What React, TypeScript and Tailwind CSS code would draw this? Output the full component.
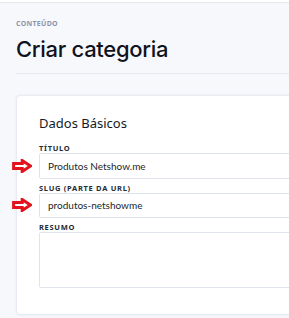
import React from 'react'

function RedArrow({ className }: { className?: string }) {
  // outlined red arrow used as an annotation next to the fields
  return (
    <svg width="20" height="14" viewBox="0 0 20 14" className={className}>
      <path
        d="M1.6 4.4 H10.2 V1.5 L18.4 7 L10.2 12.5 V9.6 H1.6 Z"
        fill="#fff"
        stroke="#e3121b"
        strokeWidth="3"
        strokeLinejoin="miter"
      />
    </svg>
  )
}

function Label({ children }: { children: React.ReactNode }) {
  return (
    <div className="text-[7.5px] leading-[8px] font-bold uppercase tracking-[0.7px] text-[#252a36] mb-px">
      {children}
    </div>
  )
}

const inputText = 'text-[10px] text-[#1b1f2b]'

export default function App() {
  return (
    <div
      className="w-[289px] h-[318px] overflow-hidden bg-[#f7f8fb] relative"
      style={{ fontFamily: '"Noto Sans", "Open Sans", sans-serif' }}
    >
      <div className="h-[3px] bg-white border-b border-[#e6e9ef]" />

      <div className="pl-4 w-[360px]">
        {/* header */}
        <div className="pt-[17px]">
          <div className="text-[7px] leading-[8px] font-bold uppercase tracking-[0.3px] text-[#8b95a7]">
            Conteúdo
          </div>
          <h1
            className="mt-[7px] text-[22px] leading-[28px] font-medium text-[#0f1320] tracking-[-0.3px]"
            style={{ fontFamily: 'Inter, sans-serif' }}
          >
            Criar categoria
          </h1>
        </div>
        <div className="mt-[10px] h-px bg-[#e6e9ef]" />

        {/* card */}
        <div className="mt-[21px] bg-white border border-[#e8ebf1] rounded-[4px] shadow-[0_0_3px_rgba(20,30,60,0.06)] pl-[22px] pt-[19px] pb-[26px]">
          <h2 className="text-[13px] leading-[16px] text-[#161a26]">Dados Básicos</h2>

          <div className="mt-[13px]">
            <Label>Título</Label>
            <div
              className={`h-[26px] border border-[#dfe4ec] rounded-[2px] flex items-center pl-[8px] ${inputText}`}
              style={{ fontFamily: 'Lato, sans-serif' }}
            >
              Produtos Netshow.me
            </div>
          </div>

          <div className="mt-[5px]">
            <Label>Slug (parte da URL)</Label>
            <div
              className={`h-[25px] border border-[#dfe4ec] rounded-[2px] flex items-center pl-[8px] ${inputText}`}
              style={{ fontFamily: 'Lato, sans-serif' }}
            >
              produtos-netshowme
            </div>
          </div>

          <div className="mt-[5px]">
            <Label>Resumo</Label>
            <div className="h-[56px] border border-[#dfe4ec] rounded-[2px]" />
          </div>
        </div>
      </div>

      <RedArrow className="absolute left-[12px] top-[159px]" />
      <RedArrow className="absolute left-[12px] top-[198px]" />
    </div>
  )
}
